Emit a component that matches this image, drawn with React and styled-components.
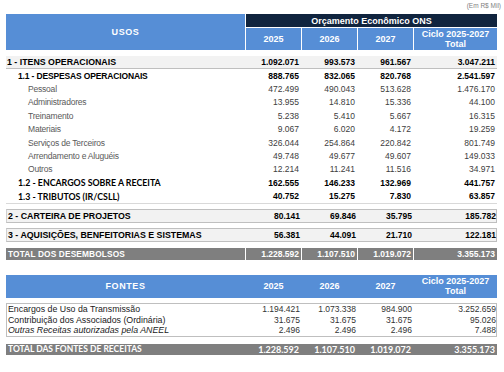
import styled, { createGlobalStyle } from 'styled-components';

const GlobalStyle = createGlobalStyle`
  body {
    margin: 0;
    background: #ffffff;
    font-family: "Liberation Sans", Arial, sans-serif;
  }
`;

const COLS = '239px 55px 55px 55px 83px';

const usos = [
  { label: '1.1 - DESPESAS OPERACIONAIS', values: ['888.765', '832.065', '820.768', '2.541.597'], kind: 'sub' },
  { label: 'Pessoal', values: ['472.499', '490.043', '513.628', '1.476.170'], kind: 'item' },
  { label: 'Administradores', values: ['13.955', '14.810', '15.336', '44.100'], kind: 'item' },
  { label: 'Treinamento', values: ['5.238', '5.410', '5.667', '16.315'], kind: 'item' },
  { label: 'Materiais', values: ['9.067', '6.020', '4.172', '19.259'], kind: 'item' },
  { label: 'Serviços de Terceiros', values: ['326.044', '254.864', '220.842', '801.749'], kind: 'item' },
  { label: 'Arrendamento e Aluguéis', values: ['49.748', '49.677', '49.607', '149.033'], kind: 'item' },
  { label: 'Outros', values: ['12.214', '11.241', '11.516', '34.971'], kind: 'item' },
  { label: '1.2 - ENCARGOS SOBRE A RECEITA', values: ['162.555', '146.233', '132.969', '441.757'], kind: 'alt' },
  { label: '1.3 - TRIBUTOS (IR/CSLL)', values: ['40.752', '15.275', '7.830', '63.857'], kind: 'alt' },
];

const fontes = [
  { label: 'Encargos de Uso da Transmissão', values: ['1.194.421', '1.073.338', '984.900', '3.252.659'] },
  { label: 'Contribuição dos Associados (Ordinária)', values: ['31.675', '31.675', '31.675', '95.026'] },
  { label: 'Outras Receitas autorizadas pela ANEEL', values: ['2.496', '2.496', '2.496', '7.488'], italic: true },
];

export default function App() {
  return (
    <Page>
      <GlobalStyle />
      <Unit>(Em R$ Mil)</Unit>

      <Header>
        <HeadTitle>USOS</HeadTitle>
        <Banner>Orçamento Econômico ONS</Banner>
        <YearCell>2025</YearCell>
        <YearCell>2026</YearCell>
        <YearCell>2027</YearCell>
        <YearCell>Ciclo 2025-2027<br />Total</YearCell>
      </Header>

      <GroupRow>
        <GroupLabel>1 - ITENS OPERACIONAIS</GroupLabel>
        <Num $bold>1.092.071</Num>
        <Num $bold>993.573</Num>
        <Num $bold>961.567</Num>
        <Num $bold>3.047.211</Num>
      </GroupRow>

      <Block>
        {usos.map((row) => (
          <Row key={row.label}>
            <Label $kind={row.kind}>{row.label}</Label>
            {row.values.map((v, i) => (
              <Num key={i} $bold={row.kind !== 'item'} $muted={row.kind === 'item'}>{v}</Num>
            ))}
          </Row>
        ))}
      </Block>

      <BoxRow>
        <GroupLabel>2 - CARTEIRA DE PROJETOS</GroupLabel>
        <Num $bold>80.141</Num>
        <Num $bold>69.846</Num>
        <Num $bold>35.795</Num>
        <Num $bold>185.782</Num>
      </BoxRow>

      <BoxRow>
        <GroupLabel>3 - AQUISIÇÕES, BENFEITORIAS E SISTEMAS</GroupLabel>
        <Num $bold>56.381</Num>
        <Num $bold>44.091</Num>
        <Num $bold>21.710</Num>
        <Num $bold>122.181</Num>
      </BoxRow>

      <TotalRow $divided>
        <TotalLabel>TOTAL DOS DESEMBOLSOS</TotalLabel>
        <TotalNum>1.228.592</TotalNum>
        <TotalNum>1.107.510</TotalNum>
        <TotalNum>1.019.072</TotalNum>
        <TotalNum>3.355.173</TotalNum>
      </TotalRow>

      <SourceHeader>
        <HeadTitle>FONTES</HeadTitle>
        <SourceYear>2025</SourceYear>
        <SourceYear>2026</SourceYear>
        <SourceYear>2027</SourceYear>
        <SourceYear>Ciclo 2025-2027<br />Total</SourceYear>
      </SourceHeader>

      <SourceBox>
        {fontes.map((row) => (
          <SourceRow key={row.label}>
            <SourceLabel $italic={row.italic}>{row.label}</SourceLabel>
            {row.values.map((v, i) => (
              <SourceNum key={i}>{v}</SourceNum>
            ))}
          </SourceRow>
        ))}
      </SourceBox>

      <TotalRow $calibri>
        <TotalLabel $calibri>TOTAL DAS FONTES DE RECEITAS</TotalLabel>
        <TotalNum $calibri>1.228.592</TotalNum>
        <TotalNum $calibri>1.107.510</TotalNum>
        <TotalNum $calibri>1.019.072</TotalNum>
        <TotalNum $calibri>3.355.173</TotalNum>
      </TotalRow>
    </Page>
  );
}

// Page

const Page = styled.div`
  width: 504px;
  height: 372px;
  padding: 0 7px 0 6px;
  box-sizing: border-box;
  display: flex;
  flex-direction: column;
  overflow: hidden;
`;

const Unit = styled.div`
  height: 14px;
  margin-right: -4px;
  text-align: right;
  font-size: 6.5px;
  line-height: 11px;
  color: #7f7f7f;
`;

// Header

const Header = styled.div`
  display: grid;
  grid-template-columns: ${COLS};
  grid-template-rows: 13px 22px;
  column-gap: 1px;
  row-gap: 1px;
  background: #ffffff;
  color: #ffffff;
  font-weight: bold;
`;

const HeadTitle = styled.div`
  grid-row: 1 / 3;
  background: #568ed6;
  display: flex;
  align-items: center;
  justify-content: center;
  font-size: 9px;
  letter-spacing: 0.6px;
`;

const Banner = styled.div`
  grid-column: 2 / 6;
  background: #10243e;
  display: flex;
  align-items: center;
  justify-content: center;
  font-size: 9px;
`;

const YearCell = styled.div`
  background: #568ed6;
  display: flex;
  align-items: center;
  justify-content: center;
  text-align: center;
  font-size: 9px;
  line-height: 10px;
`;

// Rows

const Row = styled.div`
  display: grid;
  grid-template-columns: ${COLS};
  column-gap: 1px;
  align-items: center;
  height: 13.4px;
`;

const GroupRow = styled(Row)`
  margin-top: 6px;
  height: 12px;
  background: #f2f2f2;
  border-bottom: 1px solid #bfbfbf;
`;

const Block = styled.div`
  display: flex;
  flex-direction: column;
  border-bottom: 1px solid #d9d9d9;
`;

const BoxRow = styled(Row)`
  margin-top: 5px;
  height: 12px;
  background: #f2f2f2;
  border: 1px solid #bfbfbf;
  border-left-color: #d0d0d0;
`;

const GroupLabel = styled.div`
  padding-left: 1px;
  font-size: 8.8px;
  font-weight: bold;
  color: #000000;
  white-space: nowrap;
`;

const Label = styled.div`
  white-space: nowrap;
  color: ${(p) => (p.$kind === 'item' ? '#595959' : '#000000')};
  font-weight: ${(p) => (p.$kind === 'item' ? 'normal' : 'bold')};
  font-family: ${(p) => (p.$kind === 'alt' ? '"Lato", "Liberation Sans", sans-serif' : 'inherit')};
  font-size: ${(p) => (p.$kind === 'alt' ? '8.8px' : '8.5px')};
  letter-spacing: ${(p) => (p.$kind === 'item' ? '-0.2px' : p.$kind === 'sub' ? '-0.15px' : '0')};
  padding-left: ${(p) => (p.$kind === 'item' ? '22px' : '12px')};
`;

const Num = styled.div`
  text-align: right;
  padding-right: 2px;
  font-size: 8.5px;
  font-weight: ${(p) => (p.$bold ? 'bold' : 'normal')};
  color: ${(p) => (p.$muted ? '#404040' : '#000000')};
  white-space: nowrap;
`;

// Totals

const TotalRow = styled(Row)`
  margin-top: ${(p) => (p.$calibri ? '7px' : '6px')};
  height: ${(p) => (p.$calibri ? '11px' : '12px')};
  background: ${(p) => (p.$divided ? '#ffffff' : '#7f7f7f')};
  > * {
    background: #7f7f7f;
    height: 100%;
    display: flex;
    align-items: center;
  }
`;

const TotalLabel = styled.div`
  padding-left: 2px;
  color: #ffffff;
  font-weight: bold;
  white-space: nowrap;
  font-family: ${(p) => (p.$calibri ? '"Lato", "Liberation Sans", sans-serif' : 'inherit')};
  font-size: ${(p) => (p.$calibri ? '8.5px' : '8.3px')};
  letter-spacing: ${(p) => (p.$calibri ? '0' : '0.15px')};
`;

const TotalNum = styled.div`
  justify-content: flex-end;
  padding-right: 2px;
  color: #ffffff;
  font-weight: bold;
  white-space: nowrap;
  font-family: ${(p) => (p.$calibri ? '"Lato", "Liberation Sans", sans-serif' : 'inherit')};
  font-size: ${(p) => (p.$calibri ? '9px' : '8.5px')};
`;

// Fontes

const SourceHeader = styled.div`
  margin-top: 15px;
  height: 23px;
  display: grid;
  grid-template-columns: ${COLS};
  column-gap: 1px;
  background: #568ed6;
  color: #ffffff;
  font-weight: bold;
`;

const SourceYear = styled(YearCell)`
  background: transparent;
`;

const SourceBox = styled.div`
  margin-top: 5px;
  border: 1px solid #bfbfbf;
  display: flex;
  flex-direction: column;
`;

const SourceRow = styled(Row)`
  height: 10.6px;
`;

const SourceLabel = styled.div`
  padding-left: 1px;
  font-size: 8.8px;
  color: #1a1a1a;
  font-style: ${(p) => (p.$italic ? 'italic' : 'normal')};
  white-space: nowrap;
`;

const SourceNum = styled(Num)`
  color: #333333;
`;
